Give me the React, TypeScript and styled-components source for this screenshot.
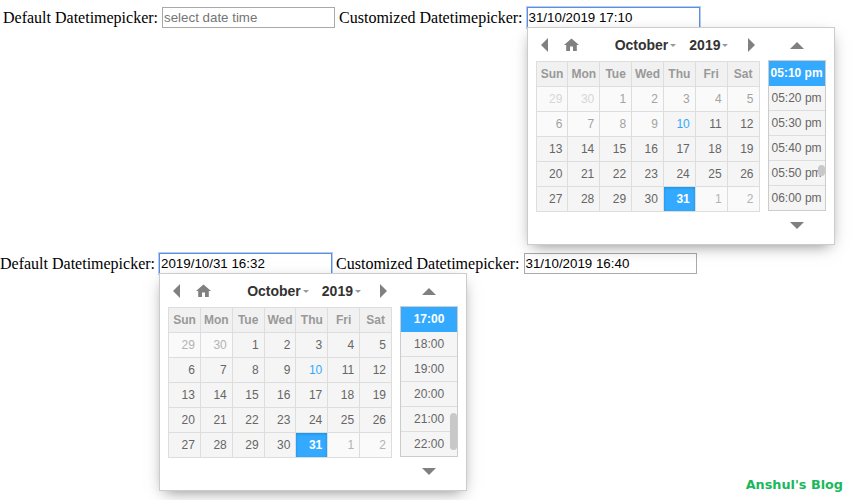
import React from "react";
import styled, { createGlobalStyle } from "styled-components";

const Global = createGlobalStyle`
  html, body { margin: 0; padding: 0; background: #fff; }
  body { font-family: "Liberation Serif", "Times New Roman", serif; font-size: 16px; color: #000; }
  * { box-sizing: border-box; }
`;

const Page = styled.div`
  position: relative;
  width: 861px;
  height: 500px;
  overflow: hidden;
  background: #fff;
`;

const TopDemo = styled.div`
  height: 250px;
  padding: 7px 0 0 3px;
`;

const BottomDemo = styled.div`
  position: relative;
  width: 702px;
  height: 250px;
  padding: 3px 0 0 0;
  background: #fff;
`;

const FormRow = styled.div`
  display: flex;
  align-items: flex-start;
  white-space: nowrap;
  line-height: 18px;
`;

const Label = styled.label`
  margin-right: 4px;
  padding-top: 2px;
`;

const Field = styled.div`
  position: relative;
  margin-right: 4px;
`;

const TextInput = styled.div<{ $focused?: boolean; $placeholder?: boolean; $width: number }>`
  width: ${(p) => p.$width}px;
  height: 21px;
  padding: 1px;
  font-family: "Liberation Sans", Arial, sans-serif;
  font-size: 13.33px;
  line-height: 17px;
  background: #fff;
  color: ${(p) => (p.$placeholder ? "#757575" : "#000")};
  border: ${(p) => (p.$focused ? "1px solid #5b8fe0" : "1px solid #a9a9a9")};
  box-shadow: ${(p) => (p.$focused ? "0 0 0 1px rgba(91,143,224,.45)" : "none")};
`;

const Picker = styled.div`
  position: absolute;
  left: 0;
  top: 20px;
  z-index: 2;
  width: 308px;
  height: 218px;
  display: flex;
  padding: 2px 8px 4px 8px;
  background: #fff;
  border: 1px solid #ccc;
  box-shadow: 0 5px 15px -5px rgba(0, 0, 0, 0.506);
  font-family: "Liberation Sans", Arial, sans-serif;
  color: #666;
`;

const DateColumn = styled.div`
  width: 224px;
  margin-right: 8px;
`;

const MonthNav = styled.div`
  height: 31px;
  display: flex;
  align-items: center;
  padding-bottom: 2px;
`;

const NavButton = styled.span<{ $w: number; $inset?: number }>`
  display: flex;
  width: ${(p) => p.$w}px;
  padding-left: ${(p) => p.$inset ?? 0}px;
  justify-content: flex-start;
  flex: none;
`;

const Selectors = styled.div`
  flex: 1;
  display: flex;
  justify-content: center;
  gap: 13px;
  padding-left: 12px;
`;

const Selector = styled.span`
  display: inline-flex;
  align-items: center;
  gap: 2px;
  font-size: 14px;
  font-weight: 700;
  color: #333;
  line-height: 18px;
`;

const Caret = styled.span`
  width: 0;
  height: 0;
  margin-top: 2px;
  border-left: 3px solid transparent;
  border-right: 3px solid transparent;
  border-top: 3px solid #999;
`;

const Calendar = styled.table`
  width: 224px;
  table-layout: fixed;
  border-collapse: collapse;
  font-size: 12px;
`;

const HeadCell = styled.th`
  height: 25px;
  padding: 0;
  border: 1px solid #ddd;
  background: #f1f1f1;
  color: #999;
  font-weight: 700;
  text-align: center;
`;

type DayKind = "normal" | "faded" | "ghost" | "disabled" | "today" | "current";

const dayColors: Record<DayKind, string> = {
  normal: "#666",
  faded: "#b3b3b3",
  ghost: "#d6d6d6",
  disabled: "#a3a3a3",
  today: "#33aaff",
  current: "#fff",
};

const DayCell = styled.td<{ $kind: DayKind }>`
  height: 25px;
  padding: 0 5px 0 0;
  border: 1px solid #ddd;
  text-align: right;
  background: ${(p) =>
    p.$kind === "current"
      ? "#33aaff"
      : p.$kind === "normal" || p.$kind === "today"
        ? "#f5f5f5"
        : "#fafafa"};
  box-shadow: ${(p) => (p.$kind === "current" ? "#178fe5 0 1px 3px 0 inset" : "none")};
  color: ${(p) => dayColors[p.$kind]};
  font-weight: ${(p) => (p.$kind === "current" ? 700 : 400)};
`;

const TimeColumn = styled.div`
  position: relative;
  width: 58px;
  display: flex;
  flex-direction: column;
  align-items: center;
`;

const ArrowSlot = styled.div<{ $h: number; $nudge?: number }>`
  flex: none;
  height: ${(p) => p.$h}px;
  padding-top: ${(p) => p.$nudge ?? 0}px;
  display: flex;
  align-items: center;
  justify-content: center;
`;

const TimeList = styled.div`
  flex: none;
  width: 58px;
  height: 151px;
  border: 1px solid #ccc;
  overflow: hidden;
`;

const TimeItem = styled.div<{ $active?: boolean }>`
  height: 25px;
  line-height: 24px;
  text-align: center;
  font-size: 12px;
  font-weight: ${(p) => (p.$active ? 700 : 400)};
  color: ${(p) => (p.$active ? "#fff" : "#666")};
  background: ${(p) => (p.$active ? "#33aaff" : "#f5f5f5")};
  border-bottom: 1px solid ${(p) => (p.$active ? "#33aaff" : "#ddd")};
`;

const ScrollThumb = styled.div<{ $top: number; $h: number }>`
  position: absolute;
  right: 1px;
  top: ${(p) => p.$top}px;
  width: 7px;
  height: ${(p) => p.$h}px;
  border-radius: 4px;
  background: #c8c8c8;
`;

const Brand = styled.div`
  position: absolute;
  right: 18px;
  bottom: 7px;
  font-family: "DejaVu Sans", Verdana, sans-serif;
  font-size: 12.8px;
  font-weight: 700;
  line-height: 16px;
  color: #1ab85c;
`;

const Tri = ({ dir, w, h }: { dir: "left" | "right" | "up" | "down"; w: number; h: number }) => {
  const pts = {
    left: `${w},0 0,${h / 2} ${w},${h}`,
    right: `0,0 ${w},${h / 2} 0,${h}`,
    up: `${w / 2},0 ${w},${h} 0,${h}`,
    down: `0,0 ${w},0 ${w / 2},${h}`,
  }[dir];
  return (
    <svg width={w} height={h} viewBox={`0 0 ${w} ${h}`} style={{ display: "block" }}>
      <polygon points={pts} fill="#808080" />
    </svg>
  );
};

const Home = () => (
  <svg width="15" height="13" viewBox="0 0 15 13" style={{ display: "block" }}>
    <path d="M7.5 0.5 L15 7 H12.8 V13 H9 V8.6 H6 V13 H2.2 V7 H0 Z" fill="#808080" />
  </svg>
);

const headers = ["Sun", "Mon", "Tue", "Wed", "Thu", "Fri", "Sat"];
const days = [
  [29, 30, 1, 2, 3, 4, 5],
  [6, 7, 8, 9, 10, 11, 12],
  [13, 14, 15, 16, 17, 18, 19],
  [20, 21, 22, 23, 24, 25, 26],
  [27, 28, 29, 30, 31, 1, 2],
];

const kindOf = (row: number, d: number, disableBefore: number): DayKind => {
  if (row === 0 && d > 20) return disableBefore ? "ghost" : "faded";
  if (row === 4 && d < 10) return "faded";
  if (d === 31) return "current";
  if (d === 10) return "today";
  if (d < disableBefore) return "disabled";
  return "normal";
};

const DatePicker = ({
  times,
  disableBefore,
  thumbTop,
  thumbH,
}: {
  times: string[];
  disableBefore: number;
  thumbTop: number;
  thumbH: number;
}) => (
  <Picker>
    <DateColumn>
      <MonthNav>
        <NavButton $w={28} $inset={5}>
          <Tri dir="left" w={7} h={14} />
        </NavButton>
        <NavButton $w={20}>
          <Home />
        </NavButton>
        <Selectors>
          <Selector>
            October
            <Caret />
          </Selector>
          <Selector>
            2019
            <Caret />
          </Selector>
        </Selectors>
        <NavButton $w={12}>
          <Tri dir="right" w={7} h={14} />
        </NavButton>
      </MonthNav>
      <Calendar>
        <thead>
          <tr>
            {headers.map((h) => (
              <HeadCell key={h}>{h}</HeadCell>
            ))}
          </tr>
        </thead>
        <tbody>
          {days.map((row, r) => (
            <tr key={r}>
              {row.map((d, i) => (
                <DayCell key={i} $kind={kindOf(r, d, disableBefore)}>
                  {d}
                </DayCell>
              ))}
            </tr>
          ))}
        </tbody>
      </Calendar>
    </DateColumn>
    <TimeColumn>
      <ArrowSlot $h={30} $nudge={1}>
        <Tri dir="up" w={14} h={7} />
      </ArrowSlot>
      <TimeList>
        {times.map((t, i) => (
          <TimeItem key={t} $active={i === 0}>
            {t}
          </TimeItem>
        ))}
      </TimeList>
      <ArrowSlot $h={28}>
        <Tri dir="down" w={14} h={7} />
      </ArrowSlot>
      <ScrollThumb $top={thumbTop} $h={thumbH} />
    </TimeColumn>
  </Picker>
);

export default function App() {
  return (
    <Page>
      <Global />
      <TopDemo>
        <FormRow>
          <Label>Default Datetimepicker:</Label>
          <Field>
            <TextInput $width={173} $placeholder>
              select date time
            </TextInput>
          </Field>
          <Label>Customized Datetimepicker:</Label>
          <Field>
            <TextInput $width={173} $focused>
              31/10/2019 17:10
            </TextInput>
            <DatePicker
              times={["05:10 pm", "05:20 pm", "05:30 pm", "05:40 pm", "05:50 pm", "06:00 pm"]}
              disableBefore={10}
              thumbTop={135}
              thumbH={11}
            />
          </Field>
        </FormRow>
      </TopDemo>
      <BottomDemo>
        <FormRow>
          <Label>Default Datetimepicker:</Label>
          <Field>
            <TextInput $width={173} $focused>
              2019/10/31 16:32
            </TextInput>
            <DatePicker
              times={["17:00", "18:00", "19:00", "20:00", "21:00", "22:00"]}
              disableBefore={0}
              thumbTop={137}
              thumbH={37}
            />
          </Field>
          <Label>Customized Datetimepicker:</Label>
          <Field>
            <TextInput $width={173}>31/10/2019 16:40</TextInput>
          </Field>
        </FormRow>
      </BottomDemo>
      <Brand>Anshul's Blog</Brand>
    </Page>
  );
}
